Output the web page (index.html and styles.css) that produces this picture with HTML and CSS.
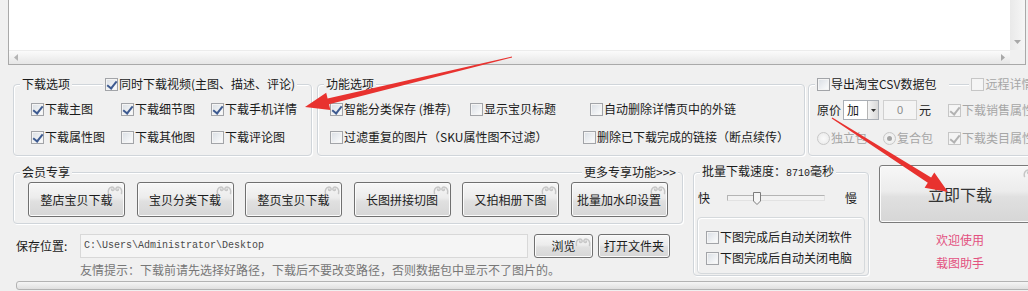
FILE: index.html
```html
<!DOCTYPE html>
<html lang="zh-CN">

<head>
  <meta charset="UTF-8">
  <title>载图助手</title>
  <link rel="stylesheet" href="styles.css">
</head>

<body>
  <div class="log">
    <div class="log-text"></div>
    <div class="vscroll">
      <svg width="7" height="4" viewBox="0 0 7 4"><path d="M0 0h7L3.5 4z" fill="#a8a8a8"/></svg>
    </div>
    <div class="hscroll">
      <svg width="4" height="7" viewBox="0 0 4 7"><path d="M4 0v7L0 3.5z" fill="#b4b4b4"/></svg>
      <svg width="4" height="7" viewBox="0 0 4 7"><path d="M0 0v7L4 3.5z" fill="#a8a8a8"/></svg>
    </div>
    <div class="corner"></div>
  </div>

  <div class="opts">
    <div class="group g-dl">
      <div class="group-head">
        <span class="title">下载选项</span>
        <label class="check head-check video"><span class="cb on"></span>同时下载视频(主图、描述、评论)</label>
      </div>
      <div class="cols3">
        <label class="check"><span class="cb on"></span>下载主图</label>
        <label class="check"><span class="cb on"></span>下载细节图</label>
        <label class="check"><span class="cb on"></span>下载手机详情</label>
        <label class="check"><span class="cb on"></span>下载属性图</label>
        <label class="check"><span class="cb"></span>下载其他图</label>
        <label class="check"><span class="cb"></span>下载评论图</label>
      </div>
    </div>

    <div class="group g-fn">
      <div class="group-head">
        <span class="title">功能选项</span>
      </div>
      <div class="fn-rows">
        <div class="fn-row">
          <label class="check w140"><span class="cb on"></span>智能分类保存 (推荐)</label>
          <label class="check w120"><span class="cb"></span>显示宝贝标题</label>
          <label class="check"><span class="cb"></span>自动删除详情页中的外链</label>
        </div>
        <div class="fn-row">
          <label class="check w253"><span class="cb"></span>过滤重复的图片（SKU属性图不过滤）</label>
          <label class="check"><span class="cb"></span>删除已下载完成的链接（断点续传）</label>
        </div>
      </div>
    </div>

    <div class="group g-csv">
      <div class="group-head">
        <label class="check head-check csv-title"><span class="cb"></span>导出淘宝CSV数据包</label>
        <label class="check head-check dis remote"><span class="cb"></span>远程详情</label>
      </div>
      <div class="csv-grid">
        <div class="price-row">
          <span>原价</span>
          <span class="select"><span class="select-val">加</span><span class="select-btn"><svg width="5" height="3" viewBox="0 0 5 3"><path d="M0 0h5L2.5 3z" fill="#333"/></svg></span></span>
          <span class="num">0</span>
          <span class="unit">元</span>
        </div>
        <label class="check dis"><span class="cb on"></span>下载销售属性</label>
        <div class="pack-row">
          <label class="check dis w66"><span class="radio"></span>独立包</label>
          <label class="check dis"><span class="radio on"></span>复合包</label>
        </div>
        <label class="check dis"><span class="cb on"></span>下载类目属性</label>
      </div>
    </div>
  </div>

  <div class="lower">
    <div class="left-col">
      <div class="group g-member">
        <div class="group-head between">
          <span class="title">会员专享</span>
          <span class="title more">更多专享功能&gt;&gt;&gt;</span>
        </div>
        <div class="btn-row">
          <button class="btn">整店宝贝下载<svg class="swirl" width="16" height="11" viewBox="0 0 16 11"><path d="M1.5 9.5C.6 6.5 2.2 3 5 3c2.2 0 3 2.6 1.2 3.4-1.3.6-2.2-.9-1.2-1.4M14.5 9.5c.9-3-.7-6.5-3.5-6.5-2.2 0-3 2.6-1.2 3.4 1.3.6 2.2-.9 1.2-1.4" fill="none" stroke="#c6c6c6" stroke-width="1.5" stroke-linecap="round"/></svg></button>
          <button class="btn">宝贝分类下载<svg class="swirl" width="16" height="11" viewBox="0 0 16 11"><path d="M1.5 9.5C.6 6.5 2.2 3 5 3c2.2 0 3 2.6 1.2 3.4-1.3.6-2.2-.9-1.2-1.4M14.5 9.5c.9-3-.7-6.5-3.5-6.5-2.2 0-3 2.6-1.2 3.4 1.3.6 2.2-.9 1.2-1.4" fill="none" stroke="#c6c6c6" stroke-width="1.5" stroke-linecap="round"/></svg></button>
          <button class="btn">整页宝贝下载<svg class="swirl" width="16" height="11" viewBox="0 0 16 11"><path d="M1.5 9.5C.6 6.5 2.2 3 5 3c2.2 0 3 2.6 1.2 3.4-1.3.6-2.2-.9-1.2-1.4M14.5 9.5c.9-3-.7-6.5-3.5-6.5-2.2 0-3 2.6-1.2 3.4 1.3.6 2.2-.9 1.2-1.4" fill="none" stroke="#c6c6c6" stroke-width="1.5" stroke-linecap="round"/></svg></button>
          <button class="btn">长图拼接切图<svg class="swirl" width="16" height="11" viewBox="0 0 16 11"><path d="M1.5 9.5C.6 6.5 2.2 3 5 3c2.2 0 3 2.6 1.2 3.4-1.3.6-2.2-.9-1.2-1.4M14.5 9.5c.9-3-.7-6.5-3.5-6.5-2.2 0-3 2.6-1.2 3.4 1.3.6 2.2-.9 1.2-1.4" fill="none" stroke="#c6c6c6" stroke-width="1.5" stroke-linecap="round"/></svg></button>
          <button class="btn">又拍相册下图<svg class="swirl" width="16" height="11" viewBox="0 0 16 11"><path d="M1.5 9.5C.6 6.5 2.2 3 5 3c2.2 0 3 2.6 1.2 3.4-1.3.6-2.2-.9-1.2-1.4M14.5 9.5c.9-3-.7-6.5-3.5-6.5-2.2 0-3 2.6-1.2 3.4 1.3.6 2.2-.9 1.2-1.4" fill="none" stroke="#c6c6c6" stroke-width="1.5" stroke-linecap="round"/></svg></button>
          <button class="btn">批量加水印设置<svg class="swirl" width="16" height="11" viewBox="0 0 16 11"><path d="M1.5 9.5C.6 6.5 2.2 3 5 3c2.2 0 3 2.6 1.2 3.4-1.3.6-2.2-.9-1.2-1.4M14.5 9.5c.9-3-.7-6.5-3.5-6.5-2.2 0-3 2.6-1.2 3.4 1.3.6 2.2-.9 1.2-1.4" fill="none" stroke="#c6c6c6" stroke-width="1.5" stroke-linecap="round"/></svg></button>
        </div>
      </div>

      <div class="save-row">
        <span class="save-label">保存位置:</span>
        <span class="path">C:\Users\Administrator\Desktop</span>
        <button class="btn small browse">浏览<svg class="swirl" width="16" height="11" viewBox="0 0 16 11"><path d="M1.5 9.5C.6 6.5 2.2 3 5 3c2.2 0 3 2.6 1.2 3.4-1.3.6-2.2-.9-1.2-1.4M14.5 9.5c.9-3-.7-6.5-3.5-6.5-2.2 0-3 2.6-1.2 3.4 1.3.6 2.2-.9 1.2-1.4" fill="none" stroke="#c6c6c6" stroke-width="1.5" stroke-linecap="round"/></svg></button>
        <button class="btn small open">打开文件夹</button>
      </div>
      <div class="hint">友情提示：下载前请先选择好路径，下载后不要改变路径，否则数据包中显示不了图片的。</div>
    </div>

    <div class="group g-speed">
      <div class="group-head">
        <span class="title">批量下载速度：<span class="digits">8710</span>毫秒</span>
      </div>
      <div class="slider-row">
        <span>快</span>
        <span class="track">
          <svg class="thumb" width="8" height="13" viewBox="0 0 8 13"><path d="M.5.5h7v8.5L4 12.5.5 9z" fill="#f6f6f6" stroke="#7c7c7c"/></svg>
        </span>
        <span class="slow">慢</span>
      </div>
      <div class="speed-box">
        <label class="check"><span class="cb"></span>下图完成后自动关闭软件</label>
        <label class="check"><span class="cb"></span>下图完成后自动关闭电脑</label>
      </div>
    </div>

    <div class="go-col">
      <button class="btn go">立即下载<svg class="swirl" width="16" height="11" viewBox="0 0 16 11"><path d="M1.5 9.5C.6 6.5 2.2 3 5 3c2.2 0 3 2.6 1.2 3.4-1.3.6-2.2-.9-1.2-1.4M14.5 9.5c.9-3-.7-6.5-3.5-6.5-2.2 0-3 2.6-1.2 3.4 1.3.6 2.2-.9 1.2-1.4" fill="none" stroke="#c6c6c6" stroke-width="1.5" stroke-linecap="round"/></svg></button>
      <div class="welcome">欢迎使用<br>载图助手</div>
    </div>
  </div>

  <div class="progress"></div>

  <svg class="arrows" width="1028" height="291" viewBox="0 0 1028 291">
    <polygon points="512.1,57.5 329,104.3 330.4,110.1 305,107 326.2,92.7 327.6,98.5 511.9,56.5" fill="#e8322f"/>
    <polygon points="832.3,117.5 931.1,177.6 934.3,172.6 948,192 924.6,187.8 927.8,182.7 831.7,118.5" fill="#e8322f"/>
  </svg>
</body>

</html>
```

FILE: styles.css
```css
* {
  box-sizing: border-box;
}

body {
  margin: 0;
  width: 1028px;
  height: 291px;
  overflow: hidden;
  position: relative;
  background: #f0f0f0;
  font-family: "Noto Sans CJK SC", "Liberation Sans", sans-serif;
  font-size: 12px;
  line-height: 14px;
  color: #1a1a1a;
}

/* log box at the top */
.log {
  margin-left: 8px;
  width: 1018px;
  height: 65px;
  border: 1px solid #a9a9a9;
  border-top: 0;
  background: #fff;
  display: grid;
  grid-template-columns: 1fr 15px;
  grid-template-rows: 1fr 14px;
}

.vscroll {
  background: linear-gradient(90deg, #e9e9e9, #f6f6f6);
  display: flex;
  flex-direction: column;
  justify-content: flex-end;
  align-items: center;
  padding-bottom: 6px;
}

.hscroll {
  background: linear-gradient(#fbfbfb, #e6e6e6);
  border-top: 1px solid #ececec;
  display: flex;
  justify-content: space-between;
  align-items: center;
  padding: 0 5px;
}

.corner {
  background: #f0f0f0;
}

/* group boxes */
.group {
  flex: none;
  border: 1px solid #d0d5da;
  border-radius: 4px;
  box-shadow: inset 1px 1px 0 #fff, 1px 1px 0 #fff;
}

.group-head {
  display: flex;
  align-items: center;
  height: 14px;
  margin-top: -8px;
  padding: 0 4px 0 6px;
}

.group-head.between {
  justify-content: space-between;
}

.title,
.head-check {
  background: #f0f0f0;
  padding: 0 2px;
  white-space: nowrap;
}

.check {
  display: inline-flex;
  align-items: center;
  gap: 1px;
  white-space: nowrap;
  height: 14px;
}

.cb {
  position: relative;
  flex: none;
  width: 13px;
  height: 13px;
  border: 1px solid #a2a4a8;
  background: linear-gradient(135deg, #d9dee4, #f8f9fa 85%);
  box-shadow: inset 0 0 0 1px #f4f4f4;
}

.cb.on::after {
  content: "";
  position: absolute;
  left: 3px;
  top: 0;
  width: 4px;
  height: 8px;
  border: solid #3d5a90;
  border-width: 0 2px 2px 0;
  transform: rotate(38deg);
}

.radio {
  position: relative;
  flex: none;
  width: 13px;
  height: 13px;
  border-radius: 50%;
  border: 1px solid #c8c8c8;
  background: radial-gradient(circle, #fafafa, #e8e8e8);
}

.radio.on::after {
  content: "";
  position: absolute;
  left: 3px;
  top: 3px;
  width: 5px;
  height: 5px;
  border-radius: 50%;
  background: #a4a4a4;
}

.check.dis {
  color: #a6a6a6;
}

.check.dis .cb {
  border-color: #c6c6c6;
  background: #f5f5f5;
}

.check.dis .cb.on::after {
  border-color: #b2b2b2;
}

/* first row */
.opts {
  display: flex;
  margin-top: 19px;
  padding-left: 13px;
}

.g-dl {
  width: 299px;
  height: 72px;
}

.video {
  margin-left: 31px;
}

.cols3 {
  display: grid;
  grid-template-columns: 90px 90px 90px;
  row-gap: 14px;
  padding: 11px 0 0 17px;
}

.g-fn {
  width: 488px;
  height: 72px;
  margin-left: 5px;
}

.fn-rows {
  display: flex;
  flex-direction: column;
  gap: 14px;
  padding: 11px 0 0 12px;
}

.fn-row {
  display: flex;
}

.w140 {
  width: 140px;
}

.w120 {
  width: 120px;
}

.w253 {
  width: 253px;
}

.w66 {
  width: 66px;
}

.g-csv {
  width: 260px;
  height: 72px;
  margin-left: 3px;
}

.csv-title {
  padding-right: 13px;
}

.remote {
  margin-left: 20px;
}

.csv-grid {
  display: grid;
  grid-template-columns: 131px auto;
  grid-auto-rows: 20px;
  row-gap: 8px;
  align-items: center;
  padding: 9px 0 0 8px;
}

.price-row,
.pack-row {
  display: flex;
  align-items: center;
}

.select {
  display: flex;
  width: 36px;
  height: 20px;
  margin-left: 2px;
  border: 1px solid #a9aeb5;
  background: #fff;
}

.select-val {
  flex: 1;
  padding-left: 3px;
  line-height: 18px;
}

.select-btn {
  width: 11px;
  border-left: 1px solid #b5b5b5;
  background: linear-gradient(90deg, #f4f4f4, #d9d9d9);
  display: flex;
  align-items: center;
  justify-content: center;
}

.num {
  width: 34px;
  height: 20px;
  margin-left: 4px;
  border: 1px solid #d0d0d0;
  background: #f4f4f4;
  color: #888;
  text-align: center;
  line-height: 18px;
  font-family: "Liberation Sans", sans-serif;
  font-size: 11px;
}

.unit {
  margin-left: 2px;
}

/* lower part */
.lower {
  display: flex;
  margin-top: 9px;
  height: 114px;
  padding-left: 13px;
}

.left-col {
  flex: none;
  width: 670px;
  padding-top: 7px;
}

.g-member {
  height: 52px;
}

.btn-row {
  display: flex;
  gap: 11.5px;
  padding: 3px 0 0 14px;
}

.btn {
  position: relative;
  flex: none;
  width: 97px;
  height: 35px;
  padding: 0;
  border: 1px solid #707070;
  border-radius: 3px;
  background: linear-gradient(#f7f7f7, #ececec 45%, #e0e0e0 55%, #d6d6d6);
  box-shadow: inset 0 0 0 1px #fbfbfb;
  font: inherit;
  color: #1c1c1c;
  display: flex;
  align-items: center;
  justify-content: center;
}

.swirl {
  position: absolute;
  top: 1px;
  right: 1px;
}

.save-row {
  display: flex;
  align-items: center;
  height: 24px;
  margin-top: 10px;
  padding-left: 3px;
}

.save-label {
  width: 64px;
}

.path {
  width: 448px;
  height: 24px;
  padding-left: 3px;
  border: 1px solid #d8d8d8;
  background: #f5f5f5;
  color: #4a4a4a;
  font-family: "Liberation Mono", monospace;
  font-size: 10px;
  display: flex;
  align-items: center;
}

.btn.small {
  height: 24px;
}

.browse {
  width: 59px;
  margin-left: 6px;
}

.open {
  width: 72px;
  margin-left: 5px;
}

.hint {
  margin-top: 5px;
  padding-left: 67px;
  color: #777;
  white-space: nowrap;
}

.g-speed {
  width: 176px;
  height: 104px;
  margin: 7px 0 0 10px;
}

.digits {
  font-family: "Liberation Mono", monospace;
  font-size: 10px;
}

.slider-row {
  display: flex;
  align-items: center;
  height: 14px;
  margin-top: 12px;
  padding-left: 4px;
}

.track {
  position: relative;
  width: 98px;
  height: 6px;
  margin-left: 17px;
  border: 1px solid #b4b4b4;
  border-right-color: #e2e2e2;
  border-bottom-color: #e2e2e2;
  background: #f2f2f2;
}

.thumb {
  position: absolute;
  left: 25px;
  top: -4px;
}

.slow {
  margin-left: 20px;
}

.speed-box {
  display: flex;
  flex-direction: column;
  gap: 7px;
  height: 57px;
  margin: 12px 3px 0;
  padding: 12px 0 0 8px;
  border: 1px solid #d5d9dc;
  border-radius: 4px;
  box-shadow: inset 1px 1px 0 #fff;
}

.go-col {
  flex: none;
  width: 162px;
  margin-left: 10px;
  text-align: center;
}

.btn.go {
  width: 162px;
  height: 58px;
  font-size: 16px;
  color: #333;
  border-color: #7a7a7a;
}

.welcome {
  padding-top: 5px;
  line-height: 23px;
  color: #e3507f;
}

.progress {
  margin: 2px 0 0 16px;
  width: 1030px;
  height: 9px;
  border: 1px solid #b3b3b3;
  border-radius: 3px;
  background: linear-gradient(#f5f5f5, #e0e0e0);
}

.arrows {
  position: absolute;
  left: 0;
  top: 0;
  pointer-events: none;
}
```
